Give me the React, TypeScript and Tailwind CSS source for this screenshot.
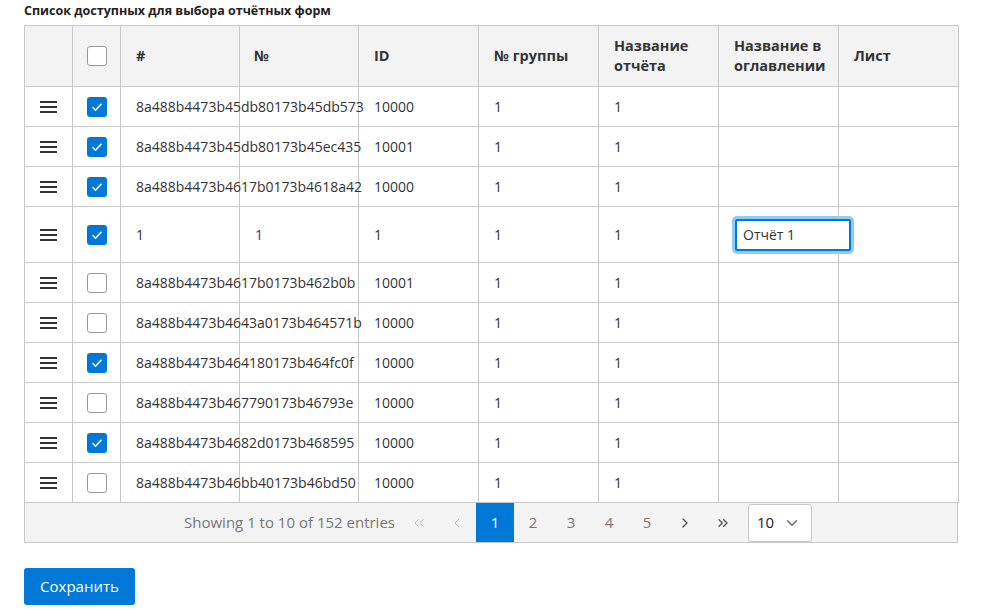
import { ChevronDown, ChevronLeft, ChevronRight, ChevronsLeft, ChevronsRight } from 'lucide-react';

type Row = { hash: string; num: string; id: string; checked: boolean; edit?: boolean };

const rows: Row[] = [
  { hash: '8a488b4473b45db80173b45db573', num: '', id: '10000', checked: true },
  { hash: '8a488b4473b45db80173b45ec435', num: '', id: '10001', checked: true },
  { hash: '8a488b4473b4617b0173b4618a42', num: '', id: '10000', checked: true },
  { hash: '1', num: '1', id: '1', checked: true, edit: true },
  { hash: '8a488b4473b4617b0173b462b0b', num: '', id: '10001', checked: false },
  { hash: '8a488b4473b4643a0173b464571b', num: '', id: '10000', checked: false },
  { hash: '8a488b4473b464180173b464fc0f', num: '', id: '10000', checked: true },
  { hash: '8a488b4473b467790173b46793e', num: '', id: '10000', checked: false },
  { hash: '8a488b4473b4682d0173b468595', num: '', id: '10000', checked: true },
  { hash: '8a488b4473b46bb40173b46bd50', num: '', id: '10000', checked: false },
];

function Burger() {
  return (
    <svg width="18" height="14" viewBox="0 0 18 14" className="mx-auto">
      <rect x="0" y="1" width="17" height="2" fill="#333" />
      <rect x="0" y="6" width="17" height="2" fill="#333" />
      <rect x="0" y="11" width="17" height="2" fill="#333" />
    </svg>
  );
}

function Check({ on }: { on: boolean }) {
  if (on) {
    return (
      <span className="mx-auto flex h-5 w-5 items-center justify-center rounded-[3px] bg-[#0078d7]">
        <svg width="14" height="14" viewBox="0 0 14 14">
          <path d="M2.5 7.2 L5.6 10.2 L11.5 3.8" fill="none" stroke="#fff" strokeWidth="1.6" />
        </svg>
      </span>
    );
  }
  return <span className="mx-auto block h-5 w-5 rounded-[3px] border border-[#999] bg-white" />;
}

const base = 'border border-[#c8c8c8] align-middle';
const cell = `${base} px-[15px]`;

export default function App() {
  return (
    <div className="min-h-screen bg-white px-6 font-['Open_Sans',sans-serif] text-[#333]">
      <div className="pt-[2px] text-[12.5px] leading-[18px] font-bold text-[#222]">
        Список доступных для выбора отчётных форм
      </div>
      <div className="mt-[5px] flex items-start">
        <div className="w-[934px]">
          <table className="w-full table-fixed border-collapse text-[14px]">
            <colgroup>
              <col className="w-[48px]" />
              <col className="w-[48px]" />
              <col className="w-[119px]" />
              <col className="w-[119px]" />
              <col className="w-[120px]" />
              <col className="w-[120px]" />
              <col className="w-[120px]" />
              <col className="w-[120px]" />
              <col className="w-[120px]" />
            </colgroup>
            <thead>
              <tr className="h-[61px] bg-[#f3f3f3] text-left text-[14.5px] leading-[20px] font-bold text-[#333]">
                <th className={base}></th>
                <th className={base}>
                  <Check on={false} />
                </th>
                <th className={cell}>#</th>
                <th className={`${base} pr-[15px] pl-[14px]`}>№</th>
                <th className={cell}>ID</th>
                <th className={cell}>№ группы</th>
                <th className={cell}>Название отчёта</th>
                <th className={cell}>Название в оглавлении</th>
                <th className={cell}>Лист</th>
              </tr>
            </thead>
            <tbody>
              {rows.map((r, i) => (
                <tr key={i} className={r.edit ? 'h-[56px]' : 'h-[40px]'}>
                  <td className={base}>
                    <Burger />
                  </td>
                  <td className={base}>
                    <Check on={r.checked} />
                  </td>
                  <td className={`${cell} overflow-visible whitespace-nowrap`}>{r.hash}</td>
                  <td className={`${cell} whitespace-nowrap text-[#4b2a7b]`}>{r.num}</td>
                  <td className={`${cell} whitespace-nowrap`}>{r.id}</td>
                  <td className={cell}>1</td>
                  <td className={cell}>1</td>
                  <td className={`${base} px-[13px]`}>
                    {r.edit && (
                      <div className="flex h-[38px] w-[122px] rounded-[5px] bg-[#8ecbf7] p-[3px]">
                        <div className="flex flex-1 items-center rounded-[2px] border-2 border-[#0078d7] bg-white px-[6px] text-[14px] text-[#333]">
                          Отчёт 1
                        </div>
                      </div>
                    )}
                  </td>
                  <td className={cell}></td>
                </tr>
              ))}
            </tbody>
          </table>
          <div className="flex h-[40px] items-center justify-center border border-t-0 border-[#c8c8c8] bg-[#f3f3f3] pl-[14px] text-[15px] text-[#777]">
            <span className="mr-[5px]">Showing 1 to 10 of 152 entries</span>
            <div className="flex h-[39px]">
              <span className="flex w-[38px] items-center justify-center text-[#bbb]">
                <ChevronsLeft size={16} strokeWidth={1.5} />
              </span>
              <span className="flex w-[38px] items-center justify-center text-[#bbb]">
                <ChevronLeft size={16} strokeWidth={1.5} />
              </span>
              <span className="flex w-[38px] items-center justify-center bg-[#0078d7] text-white">1</span>
              {['2', '3', '4', '5'].map((p) => (
                <span key={p} className="flex w-[38px] items-center justify-center">
                  {p}
                </span>
              ))}
              <span className="flex w-[38px] items-center justify-center text-[#555]">
                <ChevronRight size={16} strokeWidth={2} />
              </span>
              <span className="flex w-[38px] items-center justify-center text-[#555]">
                <ChevronsRight size={16} strokeWidth={2} />
              </span>
            </div>
            <div className="ml-[6px] flex h-[38px] w-[64px] items-center justify-between rounded-[3px] border border-[#c8c8c8] bg-white pr-[10px] pl-[8px] text-[15px] text-[#222]">
              <span>10</span>
              <ChevronDown size={18} strokeWidth={1.8} className="text-[#666]" />
            </div>
          </div>
        </div>
        <div className="mt-[236px] ml-[9px] h-[278px] w-[9px] rounded-[3px] bg-[#f5f5f5]" />
      </div>
      <button className="mt-[25px] h-[37px] w-[111px] rounded-[3px] bg-[#0078d7] text-[15px] text-white">
        Сохранить
      </button>
    </div>
  );
}
